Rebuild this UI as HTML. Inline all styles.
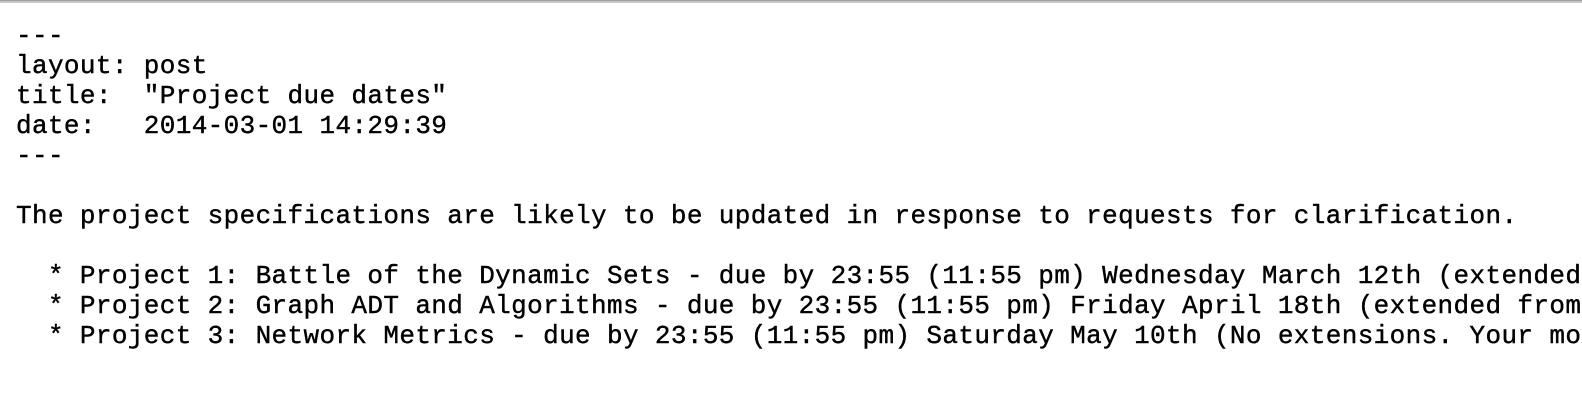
<!DOCTYPE html>
<html><head><style>
html,body{margin:0;padding:0;background:#fff;width:1582px;height:400px;overflow:hidden}
.bar{position:absolute;top:0;left:0;width:1582px;height:3px;background:#c8c8c8;border-top:1px solid #a0a0a0;box-sizing:border-box}
pre{position:absolute;left:16px;top:21px;margin:0;font-family:"Liberation Mono",monospace;font-size:26px;letter-spacing:0.37px;line-height:30px;color:#000;white-space:pre;-webkit-text-stroke:0.4px #000}
</style></head><body>
<div class="bar"></div>
<pre>---
layout: post
title:  "Project due dates"
date:   2014-03-01 14:29:39
---

The project specifications are likely to be updated in response to requests for clarification.

  * Project 1: Battle of the Dynamic Sets - due by 23:55 (11:55 pm) Wednesday March 12th (extended from
  * Project 2: Graph ADT and Algorithms - due by 23:55 (11:55 pm) Friday April 18th (extended from
  * Project 3: Network Metrics - due by 23:55 (11:55 pm) Saturday May 10th (No extensions. Your mo</pre>
</body></html>
